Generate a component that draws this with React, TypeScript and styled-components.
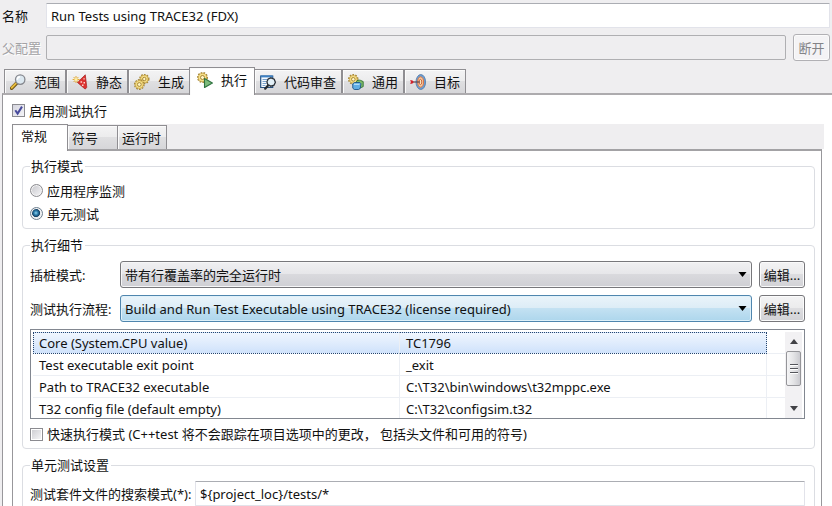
import React from "react";
import styled, { createGlobalStyle, css } from "styled-components";

const GlobalStyle = createGlobalStyle`
  *, *::before, *::after { box-sizing: border-box; }
  body { margin: 0; background: #efeef0; }
  body, button, input, select, table {
    font-family: "Noto Sans", "Noto Sans CJK SC", sans-serif;
    font-size: 13px;
    line-height: 18px;
    color: #111;
  }
`;

const Page = styled.main`
  display: flex;
  flex-direction: column;
  height: 100vh;
  overflow: hidden;
  padding-top: 3px;
`;

const FormRow = styled.div`
  display: flex;
  align-items: center;
  flex: none;
  padding: 0 2px;
  margin-bottom: 6px;
`;

const RowLabel = styled.label<{ $muted?: boolean }>`
  flex: none;
  width: 44px;
  white-space: nowrap;
  ${(p) => p.$muted && css`color: #a3a2a5; text-shadow: 1px 1px 0 #fff;`}
`;

const TextBox = styled.input`
  flex: 1;
  min-width: 0;
  height: 25px;
  padding: 0 4px;
  border: 1px solid #e2e3ea;
  border-top-color: #abadb3;
  border-radius: 1px;
  background: #fff;
  outline: none;
  &:disabled {
    border-color: #afafb2;
    border-radius: 2px;
    background: #efeef0;
  }
`;

const PushButton = styled.button<{ $width: number }>`
  flex: none;
  width: ${(p) => p.$width}px;
  height: 27px;
  margin-left: 7px;
  padding: 0;
  border: 1px solid #77777b;
  border-radius: 3px;
  background: linear-gradient(#f3f3f4, #ebebec 49%, #dddde0 50%, #d2d2d6);
  box-shadow: inset 0 0 0 1px #fbfbfb;
  &:disabled {
    border-color: #b1b0b4;
    background: #f4f3f5;
    color: #838387;
  }
`;

const TabStrip = styled.div<{ $inner?: boolean }>`
  display: flex;
  align-items: flex-end;
  flex: none;
  height: ${(p) => (p.$inner ? 25 : 26)}px;
  padding-left: ${(p) => (p.$inner ? 0 : 4)}px;
  background: #efeef0;
`;

const Tab = styled.button<{ $active?: boolean; $inner?: boolean }>`
  display: flex;
  align-items: center;
  gap: 8px;
  flex: none;
  height: 24px;
  padding: 0 5px;
  border: 1px solid #8f8e92;
  border-bottom: 0;
  border-radius: 0;
  background: linear-gradient(#f3f3f4, #ececed 49%, #dfdfe1 50%, #d6d6d9);
  box-shadow: inset 1px 1px 0 #fbfbfb;
  white-space: nowrap;
  svg { flex: none; }
  ${(p) => p.$inner && css`
    padding: 0 4px;
    min-width: 50px;
    margin-right: -1px;
    &:nth-child(2) { min-width: 51px; }
  `}
  ${(p) => p.$active && css`
    z-index: 1;
    height: 28px;
    margin: 0 -1px -2px;
    padding: 0 7px 4px;
    background: #fff;
  `}
  ${(p) => p.$active && p.$inner && css`
    height: 27px;
    min-width: 56px;
    margin-left: 0;
    padding: 0 8px 4px;
  `}
`;

const OuterPanel = styled.section`
  flex: none;
  margin-left: 2px;
  padding: 8px 8px 0 9px;
  border-top: 2px solid #adabae;
  border-left: 1px solid #98979b;
  background: #fff;
`;

const InnerPanel = styled.section`
  margin-right: 2px;
  padding: 6px 6px 0 9px;
  border: 1px solid #98979b;
  border-top: 2px solid #a3a2a5;
  border-bottom: 0;
`;

const CheckLine = styled.label<{ $height: number; $above?: number; $below?: number }>`
  display: flex;
  align-items: center;
  gap: 4px;
  height: ${(p) => p.$height}px;
  margin: ${(p) => p.$above ?? 0}px 0 ${(p) => p.$below ?? 0}px;
  white-space: nowrap;
`;

const CheckBox = styled.input.attrs({ type: "checkbox" })`
  appearance: none;
  flex: none;
  width: 13px;
  height: 13px;
  margin: 0;
  border: 1px solid #8b8b90;
  background: linear-gradient(135deg, #cfcfd4, #f4f4f6) content-box, #fff;
  padding: 1px;
  &:checked {
    background: url("data:image/svg+xml,%3Csvg xmlns='http://www.w3.org/2000/svg' viewBox='0 0 11 11'%3E%3Cpath d='M2.3 5.3 4.6 8.6 9 1.6' fill='none' stroke='%23474a9c' stroke-width='2'/%3E%3C/svg%3E"),
      linear-gradient(135deg, #d5d5de, #f4f4f8);
  }
`;

const Radio = styled.input.attrs({ type: "radio" })`
  appearance: none;
  flex: none;
  width: 13px;
  height: 13px;
  margin: 0;
  border: 1px solid #8b8b90;
  border-radius: 50%;
  background: linear-gradient(135deg, #c6c6cb, #f6f6f8);
  box-shadow: inset 0 0 0 1px #f4f4f4;
  &:checked {
    border-color: #6e7f8f;
    background: radial-gradient(circle at 45% 45%, #8fd3f0 0, #2a7cab 24%, #143f63 44%, #e6eaee 52%);
  }
`;

const Group = styled.fieldset`
  min-width: 0;
  margin: 0 0 7px;
  padding: 4px 9px 3px 7px;
  border: 1px solid #dbdde2;
  border-radius: 4px;
`;

const Legend = styled.legend`
  padding: 0 2px 0 1px;
`;

const FieldRow = styled.div`
  display: flex;
  align-items: center;
  margin: 3px 0 7px;
  & + & { margin-top: 0; }
`;

const FieldLabel = styled.label<{ $wide?: boolean }>`
  flex: none;
  width: ${(p) => (p.$wide ? 165 : 90)}px;
  white-space: nowrap;
`;

const SelectShell = styled.div`
  position: relative;
  flex: 1;
  min-width: 0;
  svg {
    position: absolute;
    right: 5px;
    top: 11px;
    pointer-events: none;
  }
`;

const Select = styled.select<{ $hot?: boolean }>`
  appearance: none;
  display: block;
  width: 100%;
  height: 27px;
  padding: 0 20px 0 4px;
  border: 1px solid ${(p) => (p.$hot ? "#5086ae" : "#77777b")};
  border-radius: 3px;
  outline: none;
  background: ${(p) =>
    p.$hot
      ? "linear-gradient(#eaf4fa, #dcecf6 49%, #c3e1f2 50%, #add6ec)"
      : "linear-gradient(#f0f0f2, #e6e6e9 49%, #d9d9dd 50%, #cfcfd4)"};
  box-shadow: inset 0 0 0 1px ${(p) => (p.$hot ? "#dff1fa" : "#f6f6f7")};
`;

const GridFrame = styled.div`
  display: flex;
  height: 90px;
  padding: 2px 2px 0;
  border: 1px solid #828790;
  background: #fff;
`;

const GridScroll = styled.div`
  flex: 1;
  min-width: 0;
  overflow: hidden;
`;

const Grid = styled.table`
  width: 100%;
  table-layout: fixed;
  border-collapse: separate;
  border-spacing: 0;
  line-height: 16px;
`;

const Cell = styled.td`
  height: 22px;
  padding: 0 6px;
  border-right: 1px solid #eceff4;
  border-bottom: 1px solid #eceff4;
  white-space: nowrap;
  &:last-child { width: 18px; padding: 0; border-right: 0; }
`;

const Row = styled.tr<{ $selected?: boolean }>`
  ${(p) => p.$selected && css`
    ${Cell}:not(:last-child) {
      border-top: 1px dotted #27466e;
      border-bottom: 1px dotted #27466e;
      background: linear-gradient(#f0f6fe, #cfe2fb);
    }
    ${Cell}:first-child { border-left: 1px dotted #27466e; padding-left: 5px; }
    ${Cell}:nth-child(2) { border-right: 1px dotted #27466e; }
  `}
`;

const ScrollBar = styled.div`
  display: flex;
  flex-direction: column;
  align-items: center;
  flex: none;
  width: 17px;
  padding: 7px 0;
  background: #f2f1f3;
`;

const Thumb = styled.div`
  display: flex;
  flex-direction: column;
  align-items: center;
  justify-content: center;
  gap: 2px;
  width: 15px;
  height: 35px;
  margin: 7px 0 auto;
  border: 1px solid #959599;
  border-radius: 2px;
  background: linear-gradient(90deg, #f5f5f6, #e4e4e6 50%, #cbcbd0);
`;

const Grip = styled.span`
  width: 8px;
  height: 2px;
  border-top: 1px solid #55565c;
  background: #fff;
`;

const Arrow = ({ up, w = 8 }: { up?: boolean; w?: number }) => (
  <svg width={w} height="5" viewBox="0 0 8 5" aria-hidden="true">
    <path d={up ? "M0 5 4 0l4 5z" : "M0 0h8L4 5z"} fill={w === 8 ? "#424246" : "#000"} />
  </svg>
);

const Icon = ({ children }: { children: React.ReactNode }) => (
  <svg width="16" height="16" viewBox="0 0 16 16" aria-hidden="true">{children}</svg>
);

const Gear = ({ x, y, r }: { x: number; y: number; r: number }) => (
  <g transform={`translate(${x} ${y})`}>
    <circle r={r} fill="none" stroke="#a5883a" strokeWidth="2" strokeDasharray="1.6 1.1" />
    <circle r={r - 0.4} fill="#f6e08a" stroke="#c9a440" strokeWidth=".7" />
    <circle r={r - 2.5} fill="#fff6c8" stroke="#94711f" strokeWidth=".8" />
  </g>
);

const ScopeIcon = () => (
  <Icon>
    <path d="M1.6 14.2 6.3 9.5" stroke="#6e5315" strokeWidth="3.6" strokeLinecap="round" />
    <path d="M1.7 13.7 6 9.4" stroke="#e8bd3d" strokeWidth="2" strokeLinecap="round" />
    <circle cx="10.2" cy="5.6" r="4.7" fill="#dce8f0" stroke="#85878d" strokeWidth="1.3" />
    <path d="M7.3 5.8A3 3 0 0 1 10 2.8" fill="none" stroke="#fff" strokeWidth="1.5" />
  </Icon>
);

const StaticIcon = () => (
  <Icon>
    <path d="M13.3.8 5.4 8.4l7.6 6.6c1.600-.5 2-1.800 1.600-3.200z" fill="#dd3230" stroke="#a32020" strokeWidth=".7" />
    <path d="M11.4 4.200h1.300v1.300h-1.300zM8.500 7.200h1.600v1.600H8.500zM11.500 8H13v1.500h-1.500zM10 10.500h1.500V12H10z" fill="#ffd5cc" />
    <path d="M4 2v7M.6 5.500h7M1.600 3l4.800 5M6.400 3 1.600 8" stroke="#e3a932" strokeWidth="1" />
    <circle cx="4" cy="5.500" r="1.500" fill="#fff1a8" />
  </Icon>
);

const BuildIcon = () => (
  <Icon>
    <Gear x={10.3} y={5} r={4.2} />
    <Gear x={5.3} y={10.5} r={4.4} />
  </Icon>
);

const RunIcon = () => (
  <Icon>
    <Gear x={5.5} y={5.5} r={4.5} />
    <path d="M7.5 6.6v9l7.9-4.5z" fill="#7dbb7c" stroke="#2f7340" strokeWidth="1.1" strokeLinejoin="round" />
  </Icon>
);

const ReviewIcon = () => (
  <Icon>
    <path d="M.7 2h12v11.500H.7z" fill="#f7fbff" stroke="#27517f" strokeWidth="1.2" />
    <path d="M.7 2.4h12" stroke="#3f82c4" strokeWidth="2" />
    <path d="M2.5 5.5H8M2.5 7.5h4M2.5 9.5h4M2.5 11.5h3" stroke="#7aa2cc" />
    <path d="m8.4 11-3.200 3.700" stroke="#252a30" strokeWidth="2.2" strokeLinecap="round" />
    <path d="m11 3.800 3.200 1.400 1.200 3-1.400 3-3.200 1-3-1.500-.9-2.900 1.300-2.800z" fill="#e3f0f7" stroke="#2b3138" strokeWidth="1.3" />
  </Icon>
);

const GeneralIcon = () => (
  <Icon>
    <Gear x={5.3} y={5.3} r={4.3} />
    <path d="M8.5 7.5c0-1 2.5-1.8 4.2-1.1l2.5 1.2v5L12 14H8.5z" fill="#80bd68" stroke="#2f7031" strokeWidth=".9" />
    <path d="M4.7 9.9 6.5 8.5h5.3l1.2 1.3-.8 4.7-1.7 1H6.3l-1.5-1.3z" fill="#61aee3" stroke="#1c5588" strokeWidth=".9" />
    <path d="M6 10.3h5.5" stroke="#c5e6fb" />
  </Icon>
);

const TargetIcon = () => (
  <Icon>
    <ellipse cx="10.8" cy="8" rx="4.8" ry="7.5" fill="#6a9dd2" stroke="#5478a4" strokeWidth=".8" />
    <ellipse cx="10.6" cy="8" rx="3" ry="5.2" fill="#f6cba0" stroke="#df7541" strokeWidth="1" />
    <ellipse cx="10.4" cy="8" rx="1.4" ry="2.6" fill="#f4e7c3" stroke="#c4532f" strokeWidth=".9" />
    <path d="M2 8h8" stroke="#5d4a55" strokeWidth="1.2" />
    <path d="M0 6.200h2.200L3.800 8 2.200 9.800H0L1 8z" fill="#d3202c" />
  </Icon>
);

const tabs = [
  { name: "范围", icon: <ScopeIcon /> },
  { name: "静态", icon: <StaticIcon /> },
  { name: "生成", icon: <BuildIcon /> },
  { name: "执行", icon: <RunIcon />, active: true },
  { name: "代码审查", icon: <ReviewIcon /> },
  { name: "通用", icon: <GeneralIcon /> },
  { name: "目标", icon: <TargetIcon /> },
];

const properties = [
  ["Core (System.CPU value)", "TC1796"],
  ["Test executable exit point", "_exit"],
  ["Path to TRACE32 executable", "C:\\T32\\bin\\windows\\t32mppc.exe"],
  ["T32 config file (default empty)", "C:\\T32\\configsim.t32"],
];

const ComboRow = ({ id, label, value, hot }: { id: string; label: string; value: string; hot?: boolean }) => (
  <FieldRow>
    <FieldLabel htmlFor={id}>{label}</FieldLabel>
    <SelectShell>
      <Select id={id} $hot={hot}><option>{value}</option></Select>
      <Arrow w={9} />
    </SelectShell>
    <PushButton type="button" $width={46}>编辑...</PushButton>
  </FieldRow>
);

export default function App() {
  return (
    <>
      <GlobalStyle />
      <Page>
        <FormRow>
          <RowLabel htmlFor="name">名称</RowLabel>
          <TextBox id="name" defaultValue="Run Tests using TRACE32 (FDX)" />
        </FormRow>
        <FormRow>
          <RowLabel htmlFor="parent" $muted>父配置</RowLabel>
          <TextBox id="parent" disabled />
          <PushButton type="button" $width={37} disabled>断开</PushButton>
        </FormRow>
        <TabStrip role="tablist">
          {tabs.map((t) => (
            <Tab key={t.name} type="button" role="tab" aria-selected={!!t.active} $active={t.active}>
              {t.icon}{t.name}
            </Tab>
          ))}
        </TabStrip>
        <OuterPanel>
          <CheckLine $height={15} $below={6}><CheckBox defaultChecked />启用测试执行</CheckLine>
          <TabStrip role="tablist" $inner>
            <Tab type="button" role="tab" aria-selected $active $inner>常规</Tab>
            <Tab type="button" role="tab" aria-selected={false} $inner>符号</Tab>
            <Tab type="button" role="tab" aria-selected={false} $inner>运行时</Tab>
          </TabStrip>
          <InnerPanel>
            <Group>
              <Legend>执行模式</Legend>
              <CheckLine $height={23}><Radio name="mode" />应用程序监测</CheckLine>
              <CheckLine $height={23}><Radio name="mode" defaultChecked />单元测试</CheckLine>
            </Group>
            <Group>
              <Legend>执行细节</Legend>
              <ComboRow id="instrumentation" label="插桩模式:" value="带有行覆盖率的完全运行时" />
              <ComboRow id="flow" label="测试执行流程:" value="Build and Run Test Executable using TRACE32 (license required)" hot />
              <GridFrame>
                <GridScroll>
                  <Grid>
                    <tbody>
                      {properties.map(([key, value], i) => (
                        <Row key={key} $selected={i === 0}>
                          <Cell>{key}</Cell>
                          <Cell>{value}</Cell>
                          <Cell />
                        </Row>
                      ))}
                    </tbody>
                  </Grid>
                </GridScroll>
                <ScrollBar aria-hidden="true">
                  <Arrow up />
                  <Thumb><Grip /><Grip /><Grip /></Thumb>
                  <Arrow />
                </ScrollBar>
              </GridFrame>
              <CheckLine $height={22} $above={4}>
                <CheckBox />快速执行模式 (C++test 将不会跟踪在项目选项中的更改， 包括头文件和可用的符号)
              </CheckLine>
            </Group>
            <Group>
              <Legend>单元测试设置</Legend>
              <FieldRow>
                <FieldLabel htmlFor="pattern" $wide>测试套件文件的搜索模式(*):</FieldLabel>
                <TextBox id="pattern" defaultValue={"${project_loc}/tests/*"} />
              </FieldRow>
            </Group>
          </InnerPanel>
        </OuterPanel>
      </Page>
    </>
  );
}
